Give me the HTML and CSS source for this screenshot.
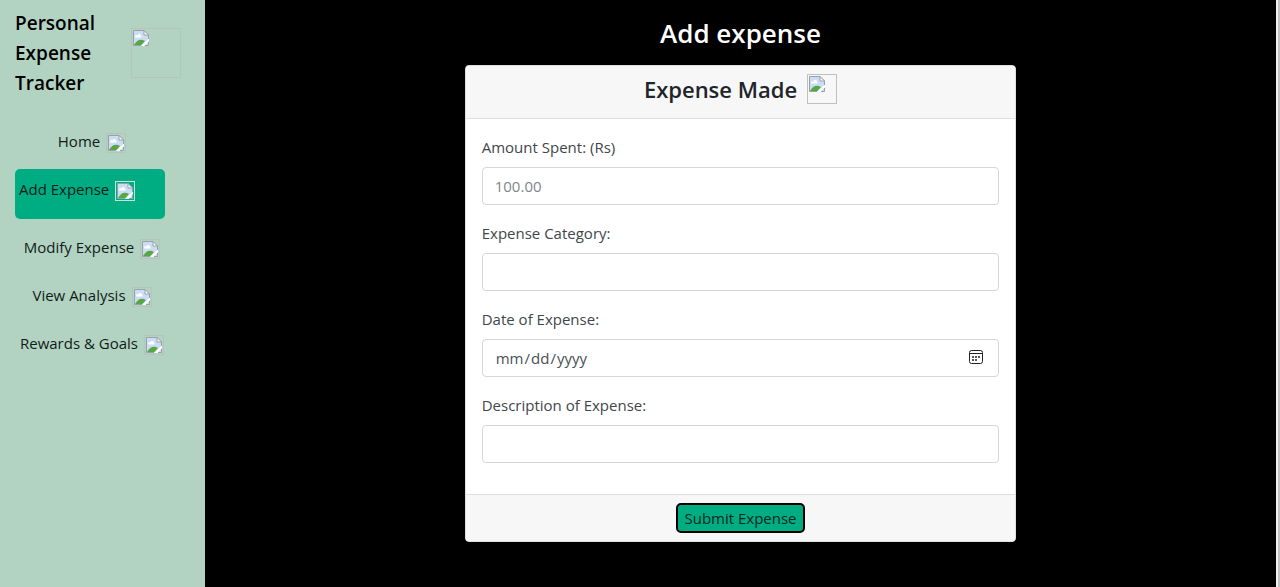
FILE: index.html
```html
<!DOCTYPE html>
<html lang="en">
<head>
  <meta charset="utf-8">
  <title>Personal Expense Tracker</title>
  <link rel="stylesheet" href="styles.css">
</head>
<body>
  <svg class="defs" aria-hidden="true">
    <symbol id="picture" viewBox="0 0 16 16">
      <path d="M.5.5H11L15.500 5V15.500H.5Z" fill="#cbdcf5"/>
      <path d="M2 6.500C2 5 4 5 4.500 5.500C5 3.500 8 3.500 8 6C9 6 9 7.500 8 7.500H3C2 7.500 2 7 2 6.500Z" fill="#fff"/>
      <path d="M1 15.500V15C4 9.500 8 8.500 12 11L8 15.500Z" fill="#57a744"/>
      <path d="M8 16L12.500 11.500L16 8.500V11L11.500 16Z" fill="#fff"/>
      <path d="M8 15.500H.5V.5H11L15.500 5V9M12 15.500H15.500V12" fill="none" stroke="#9a9fa8"/>
      <path d="M11 .5V5H15.500Z" fill="#fff" stroke="#9a9fa8"/>
    </symbol>
  </svg>
  <div class="page">
    <aside class="sidebar">
      <div class="brand">
        <h1 class="brand-name">Personal Expense Tracker</h1>
        <span class="thumb thumb-large"><svg class="picture"><use href="#picture"/></svg></span>
      </div>
      <nav class="nav">
        <a class="nav-link" href="#">Home <span class="thumb"><svg class="picture"><use href="#picture"/></svg></span></a>
        <a class="nav-link active" href="#">Add Expense <span class="thumb"><svg class="picture"><use href="#picture"/></svg></span></a>
        <a class="nav-link" href="#">Modify Expense <span class="thumb"><svg class="picture"><use href="#picture"/></svg></span></a>
        <a class="nav-link" href="#">View Analysis <span class="thumb"><svg class="picture"><use href="#picture"/></svg></span></a>
        <a class="nav-link" href="#">Rewards &amp; Goals <span class="thumb"><svg class="picture"><use href="#picture"/></svg></span></a>
      </nav>
    </aside>
    <main class="main">
      <h2 class="title">Add expense</h2>
      <form class="card">
        <header class="card-header">
          <h3 class="card-title">Expense Made</h3>
          <span class="thumb thumb-medium"><svg class="picture"><use href="#picture"/></svg></span>
        </header>
        <div class="card-body">
          <div class="field">
            <label for="amount">Amount Spent: (Rs)</label>
            <input class="control" id="amount" type="text" inputmode="decimal" placeholder="100.00">
          </div>
          <div class="field">
            <label for="category">Expense Category:</label>
            <input class="control" id="category" type="text">
          </div>
          <div class="field">
            <label for="date">Date of Expense:</label>
            <div class="date-box">
              <input class="control" id="date" type="date">
              <svg class="calendar" viewBox="0 0 16 16" aria-hidden="true">
                <rect x="1.500" y="1.500" width="13" height="13" rx="2" fill="none" stroke="#222"/>
                <path d="M1.500 4.500H14.500" stroke="#222"/>
                <path d="M4 8H6M7 8H9M10 8H12M4 11H6M7 11H9" stroke="#222" stroke-width="1.600"/>
              </svg>
            </div>
          </div>
          <div class="field">
            <label for="description">Description of Expense:</label>
            <input class="control" id="description" type="text">
          </div>
        </div>
        <footer class="card-footer">
          <button class="submit" type="submit">Submit Expense</button>
        </footer>
      </form>
    </main>
    <div class="edge"></div>
  </div>
</body>
</html>
```
FILE: styles.css
```css
* {
  box-sizing: border-box;
}

body {
  margin: 0;
  background: #000;
  color: #212529;
  font-family: "Segoe UI", "Open Sans", "Noto Sans", sans-serif;
  font-size: 15px;
  line-height: 24px;
}

h1, h2, h3 {
  margin: 0;
}

.defs {
  position: absolute;
  width: 0;
  height: 0;
}

.page {
  display: flex;
  min-height: 100vh;
}

.sidebar {
  flex: 0 0 205px;
  padding: 8px 24px 16px 15px;
  background: #b2d3c2;
}

.brand {
  display: flex;
  align-items: center;
  justify-content: space-between;
  min-height: 90px;
}

.brand-name {
  width: 100px;
  color: #000;
  font-size: 19px;
  font-weight: 600;
  line-height: 30px;
}

.nav {
  display: flex;
  flex-direction: column;
  gap: 8px;
  margin: 23px 12px 0 0;
}

.nav-link {
  display: flex;
  justify-content: center;
  gap: 6px;
  padding: 8px 0;
  color: #111c18;
  text-decoration: none;
  white-space: nowrap;
}

.nav-link.active {
  justify-content: flex-start;
  width: 150px;
  height: 50px;
  padding: 8px 4px;
  border-radius: 5px;
  background: #00ad83;
}

.thumb {
  display: block;
  flex: none;
  width: 20px;
  height: 20px;
  margin-top: 4px;
  padding: 1px;
  border: 1px solid #b4c6bc;
}

.active .thumb {
  border-color: #c0e6da;
}

.thumb-large {
  width: 50px;
  height: 50px;
  margin-top: 0;
}

.thumb-medium {
  width: 30px;
  height: 30px;
  margin-top: 0;
  border-color: #c0c0c0;
}

.picture {
  display: block;
  width: 16px;
  height: 16px;
}

.main {
  display: flex;
  flex: 1;
  flex-direction: column;
  align-items: center;
  padding: 16px 0;
}

.title {
  margin-bottom: 15px;
  color: #fff;
  font-size: 26px;
  font-weight: 600;
  line-height: 34px;
}

.card {
  width: 51.5%;
  overflow: hidden;
  border: 1px solid #dfdfdf;
  border-radius: 4px;
  background: #fff;
}

.card-header {
  display: flex;
  justify-content: center;
  gap: 10px;
  min-height: 53px;
  padding: 8px 16px;
  border-bottom: 1px solid #dfdfdf;
  background: #f7f7f7;
}

.card-title {
  font-size: 22px;
  font-weight: 600;
  line-height: 30px;
}

.card-body {
  padding: 16px 16px 15px;
}

.field {
  margin-bottom: 16px;
}

.field label {
  display: block;
  margin-bottom: 8px;
  color: #41464b;
}

.control {
  display: block;
  width: 100%;
  height: 38px;
  padding: 6px 12px;
  border: 1px solid #d3d7db;
  border-radius: 4px;
  background: #fff;
  color: #495057;
  font: inherit;
}

.control::placeholder {
  color: #80868c;
  opacity: 1;
}

.control::-webkit-datetime-edit,
.control::-webkit-datetime-edit-fields-wrapper {
  padding: 0;
}

.control::-webkit-calendar-picker-indicator {
  opacity: 0;
}

.date-box {
  position: relative;
}

.calendar {
  position: absolute;
  top: 10px;
  right: 15px;
  width: 16px;
  height: 16px;
  pointer-events: none;
}

.card-footer {
  display: flex;
  justify-content: center;
  padding: 8px 16px;
  border-top: 1px solid #dfdfdf;
  background: #f7f7f7;
}

.submit {
  height: 30px;
  padding: 1px 6px;
  border: 2px solid #000;
  border-radius: 5px;
  background: #00ad83;
  color: #05281f;
  font: inherit;
}

.edge {
  flex: 0 0 4px;
  border-left: 2px solid #f1f1f1;
  background: #c1c1c1;
}
```
